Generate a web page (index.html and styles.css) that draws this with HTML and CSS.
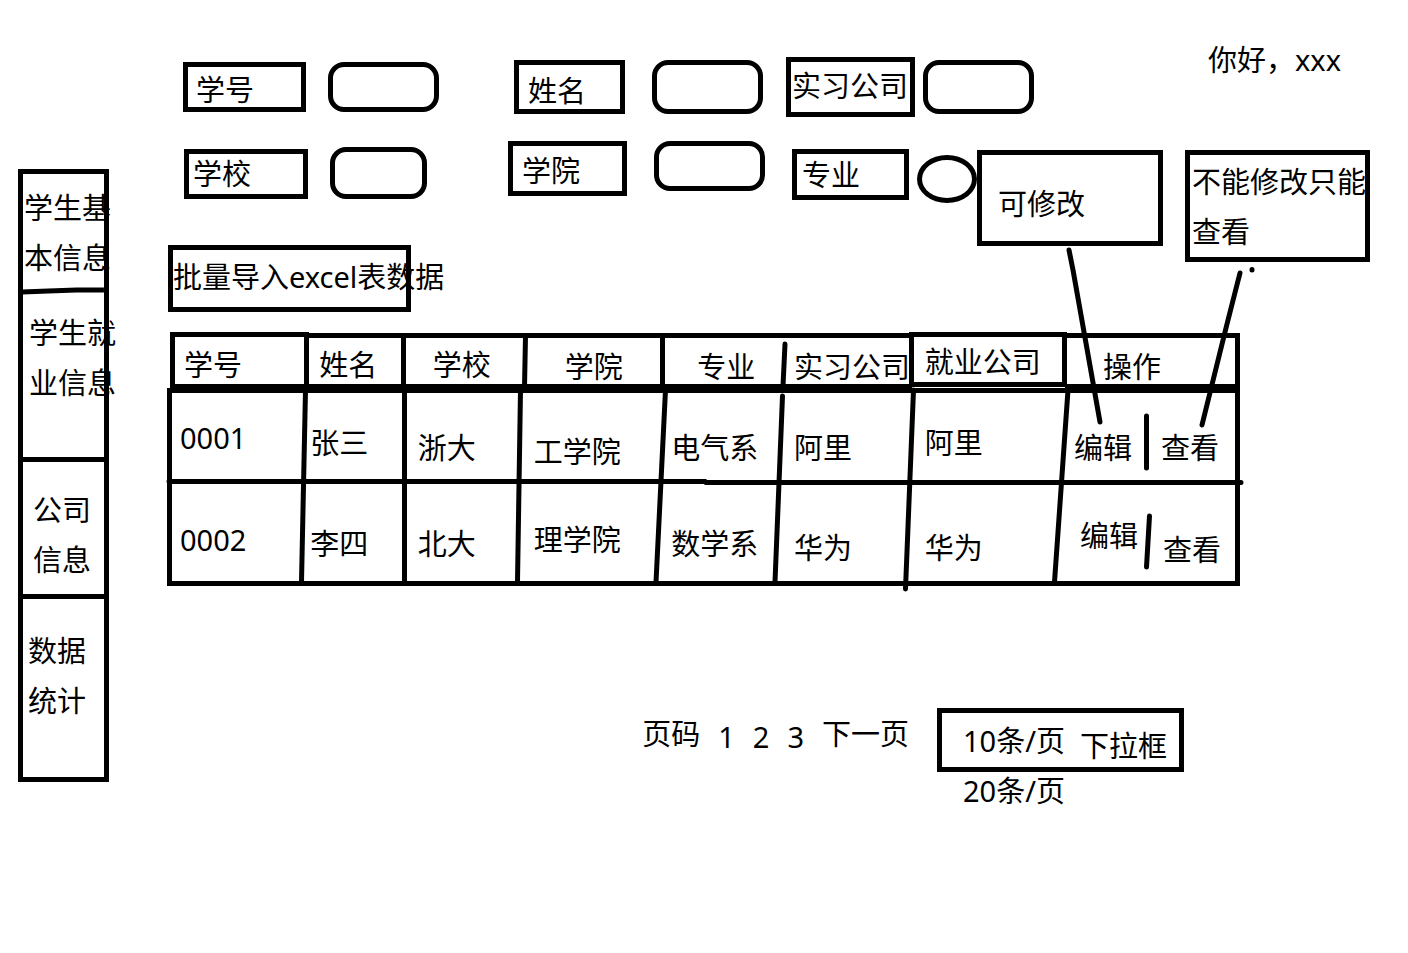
FILE: index.html
```html
<!DOCTYPE html>
<html lang="zh-CN">
<head>
<meta charset="utf-8">
<title>学生就业信息</title>
<link rel="stylesheet" href="styles.css">
</head>
<body>
<div class="page">
  <nav class="side">
    <a class="side-item side-basic" href="#">学生基<br>本信息
      <svg class="side-rule" viewBox="0 0 90 8" preserveAspectRatio="none" aria-hidden="true"><path d="M4 5 L30 4 L58 3 L85 3"/></svg>
    </a>
    <a class="side-item side-jobs" href="#">学生就<br>业信息</a>
    <a class="side-item side-company" href="#">公司<br>信息</a>
    <a class="side-item side-stats" href="#">数据<br>统计</a>
  </nav>

  <main class="main">
    <p class="greeting">你好，xxx</p>

    <form class="filters">
      <div class="filter-row row-one">
        <div class="field gap-wide"><label class="tag tag-no" for="f-no">学号</label><input class="box box-low" id="f-no" type="text"></div>
        <div class="field gap-wider"><label class="tag tag-name" for="f-name">姓名</label><input class="box" id="f-name" type="text"></div>
        <div class="field gap-small"><label class="tag tag-intern" for="f-intern">实习公司</label><input class="box" id="f-intern" type="text"></div>
      </div>
      <div class="filter-row row-two">
        <div class="field gap-wide field-bottom"><label class="tag tag-school" for="f-school">学校</label><input class="box box-short" id="f-school" type="text"></div>
        <div class="field gap-wider field-top"><label class="tag tag-college" for="f-college">学院</label><input class="box box-low" id="f-college" type="text"></div>
        <div class="field gap-small field-bottom"><label class="tag tag-major" for="f-major">专业</label><input class="box box-round" id="f-major" type="text"></div>
      </div>
    </form>

    <button class="import" type="button">批量导入excel表数据</button>

    <div class="table-wrap">
      <table class="students">
        <colgroup><col class="c1"><col class="c2"><col class="c3"><col class="c4"><col class="c5"><col class="c6"><col class="c7"><col class="c8"></colgroup>
        <thead>
          <tr><th>学号</th><th>姓名</th><th>学校</th><th class="low">学院</th><th class="low">专业</th><th class="low">实习公司</th><th class="high">就业公司</th><th class="low">操作</th></tr>
        </thead>
        <tbody>
          <tr class="first">
            <td class="number">0001</td><td class="high">张三</td><td>浙大</td><td class="low">工学院</td><td>电气系</td><td>阿里</td><td class="high">阿里</td>
            <td><div class="actions"><button type="button">编辑</button><button type="button">查看</button></div></td>
          </tr>
          <tr class="second">
            <td class="high">0002</td><td>李四</td><td>北大</td><td class="high">理学院</td><td>数学系</td><td class="low">华为</td><td class="low">华为</td>
            <td class="stepped"><div class="actions"><button type="button">编辑</button><button type="button">查看</button></div></td>
          </tr>
        </tbody>
      </table>
      <svg class="rules" viewBox="0 0 1080 262" preserveAspectRatio="none" aria-hidden="true">
        <path d="M8 4.500H141 M141 5.500H747 M747 4.500H900 M900 5.500H1075"/>
        <path d="M7.500 2V60 M141.500 2V57 M238.500 4V57 M360.500 6L359.500 57 M497.500 4V57 M746.500 2V57 M899.500 2V57"/>
        <path d="M5 56.500H747 M747 54.500H900 M900 56.500H1075 M2 60.500H1075"/>
        <path d="M4.500 58V256 M1072.500 3V256 M2 253.500H1075 M4 151.500H540L541 152.500H1075"/>
        <path d="M140.500 60L136.500 252 M239.500 60V252 M355.500 60L352.500 252 M500.500 60L491 252 M903 60L889.500 252"/>
        <path class="round" d="M620 14L618 56 M617.500 66L610 252 M748.500 60L740.500 259 M1070 152.500H1076 M4 151.500H10 M981.500 86V138 M984.500 186L981.500 237"/>
      </svg>
    </div>

    <div class="pager">
      <span>页码</span>
      <div class="numbers"><a href="#">1</a><a href="#">2</a><a href="#">3</a></div>
      <a href="#">下一页</a>
      <div class="size">
        <div class="size-box">
          <select id="size"><option>10条/页</option><option>20条/页</option></select>
          <label for="size">下拉框</label>
        </div>
        <div class="size-option">20条/页</div>
      </div>
    </div>

    <aside class="note note-edit">可修改</aside>
    <aside class="note note-view">不能修改只能<br>查看</aside>
    <svg class="pointers" viewBox="0 0 330 440" aria-hidden="true">
      <path d="M29 250L33 270L60 422 M200 273L187 324L162 425 M212 269.500V270"/>
    </svg>
  </main>
</div>
</body>
</html>
```
FILE: styles.css
```css
* {
  box-sizing: border-box;
}

body {
  margin: 0;
  background: #fff;
  color: #000;
  font: 29px/38px "Noto Sans", "Noto Sans CJK SC", sans-serif;
}

button,
input,
select {
  margin: 0;
  padding: 0;
  border: 0;
  border-radius: 0;
  background: none;
  color: inherit;
  font: inherit;
  appearance: none;
}

a {
  color: inherit;
  text-decoration: none;
}

svg {
  fill: none;
  stroke: #000;
  stroke-width: 5px;
}

svg path {
  vector-effect: non-scaling-stroke;
}

.page {
  display: flex;
  align-items: flex-start;
  gap: 59px;
  padding: 0 38px 0 18px;
}

/* Side navigation */
.side {
  flex: none;
  width: 91px;
  margin-top: 169px;
}

.side-item {
  display: block;
  position: relative;
  border: 0 solid #000;
  border-width: 0 5px;
  line-height: 50px;
  white-space: nowrap;
}

.side-basic {
  height: 124px;
  padding: 9px 0 0 1px;
  border-top-width: 5px;
}

.side-jobs {
  height: 164px;
  padding: 15px 0 0 6px;
}

.side-company {
  height: 137px;
  padding: 23px 0 0 10px;
  border-top-width: 5px;
}

.side-stats {
  height: 188px;
  padding: 27px 0 0 5px;
  border-width: 5px;
}

.side-rule {
  position: absolute;
  left: -5px;
  bottom: -2px;
  width: 91px;
  height: 8px;
}

/* Main column */
.main {
  position: relative;
  flex: 1;
  min-width: 0;
  padding-top: 41px;
}

.greeting {
  width: 162px;
  margin: 0 0 0 auto;
  white-space: nowrap;
}

/* Filters */
.filters {
  display: grid;
  gap: 24px;
  margin: -22px 162px 0 15px;
}

.filter-row {
  display: grid;
  align-items: center;
}

.row-one {
  grid-template-columns: 331fr 272fr 422fr;
}

.row-two {
  grid-template-columns: 325fr 284fr 416fr;
  height: 62px;
}

.field {
  display: flex;
  align-items: center;
}

.field-top {
  align-self: start;
  align-items: flex-start;
}

.field-bottom {
  align-self: end;
  align-items: flex-end;
}

.gap-wide {
  gap: 22px;
}

.gap-wider {
  gap: 27px;
}

.gap-small {
  gap: 8px;
}

.tag {
  flex: none;
  height: 50px;
  border: 5px solid #000;
  white-space: nowrap;
}

.tag-no {
  width: 123px;
  padding: 4px 0 0 8px;
}

.tag-name {
  width: 111px;
  height: 54px;
  padding: 7px 0 0 9px;
}

.tag-intern {
  width: 129px;
  height: 60px;
  padding: 5px 0 0 1px;
}

.tag-school {
  width: 124px;
  margin: 0 0 4px 1px;
  padding: 1px 0 0 4px;
}

.tag-college {
  width: 119px;
  height: 55px;
  padding: 6px 0 0 9px;
}

.tag-major {
  width: 117px;
  height: 51px;
  margin-bottom: 3px;
  padding: 2px 0 0 5px;
}

.box {
  width: 111px;
  height: 54px;
  padding: 0 8px;
  border: 5px solid #000;
  border-radius: 16px;
}

.box-short {
  width: 97px;
  height: 52px;
  margin-bottom: 4px;
}

.box-low {
  height: 50px;
}

.box-round {
  width: 60px;
  height: 48px;
  border-radius: 50%;
}

.import {
  display: block;
  width: 243px;
  height: 67px;
  margin-top: 42px;
  padding-bottom: 4px;
  border: 5px solid #000;
  text-align: left;
  white-space: nowrap;
}

/* Student table */
.table-wrap {
  position: relative;
  margin: 20px 130px 0 0;
}

.students {
  width: 100%;
  border-collapse: collapse;
  table-layout: fixed;
}

.c1 { width: 12.8%; }
.c2 { width: 9.2%; }
.c3 { width: 11%; }
.c4 { width: 13.1%; }
.c5 { width: 11%; }
.c6 { width: 12.2%; }
.c7 { width: 14.2%; }
.c8 { width: 16.5%; }

.students th,
.students td {
  padding: 0 0 0 14px;
  font-weight: 400;
  text-align: left;
  vertical-align: middle;
  white-space: nowrap;
}

.students th {
  height: 56px;
  padding-top: 11px;
  padding-bottom: 2px;
}

.students th:first-child { padding-left: 16px; }
.students th:nth-child(3) { padding-left: 29px; }
.students th:nth-child(4) { padding-left: 43px; }
.students th:nth-child(5) { padding-left: 35px; }
.students th:nth-child(8) { padding-left: 40px; }

.first td {
  height: 96px;
  padding-top: 36px;
  padding-bottom: 13px;
}

.second td {
  height: 102px;
  padding-top: 37px;
  padding-bottom: 19px;
}

.students td:nth-child(1) { padding-left: 12px; }
.students td:nth-child(2) { padding-left: 5px; }
.students td:nth-child(4) { padding-left: 12px; }
.students td:nth-child(5) { padding-left: 9px; }
.students td:nth-child(8) { padding-left: 11px; }

.students .high {
  vertical-align: top;
}

.students .low {
  vertical-align: bottom;
}

.students .number {
  padding-top: 31px;
  vertical-align: top;
}

.actions {
  display: flex;
  gap: 29px;
}

.students td.stepped {
  padding: 33px 0 17px 17px;
}

.stepped .actions {
  gap: 25px;
  height: 52px;
  align-items: flex-end;
}

.stepped button:first-child {
  align-self: flex-start;
}

.rules {
  position: absolute;
  left: -3px;
  top: -2px;
  width: calc(100% + 8px);
  height: calc(100% + 8px);
  pointer-events: none;
}

.round,
.pointers {
  stroke-linecap: round;
}

/* Pagination */
.pager {
  display: flex;
  gap: 18px;
  margin: 122px 186px 0 0;
  justify-content: flex-end;
  align-items: flex-start;
  white-space: nowrap;
}

.pager > span,
.pager > a {
  margin-top: 7px;
}

.numbers {
  display: flex;
  gap: 18px;
  margin-top: 10px;
}

.size {
  width: 247px;
  margin-left: 10px;
}

.size-box {
  display: flex;
  gap: 12px;
  height: 64px;
  padding: 9px 0 0 21px;
  border: 5px solid #000;
}

.size-box select {
  width: 105px;
  height: 38px;
}

.size-box label {
  margin-top: 5px;
}

.size-option {
  padding-left: 26px;
}

/* Annotations laid over the page */
.note {
  position: absolute;
  top: 150px;
  border: 5px solid #000;
  line-height: 50px;
  white-space: nowrap;
}

.note-edit {
  right: 207px;
  width: 186px;
  height: 96px;
  padding: 24px 0 0 16px;
}

.note-view {
  right: 0;
  width: 185px;
  height: 112px;
  padding: 2px 0 0 2px;
}

.pointers {
  position: absolute;
  top: 0;
  right: 0;
  width: 330px;
  height: 440px;
  pointer-events: none;
}
```
